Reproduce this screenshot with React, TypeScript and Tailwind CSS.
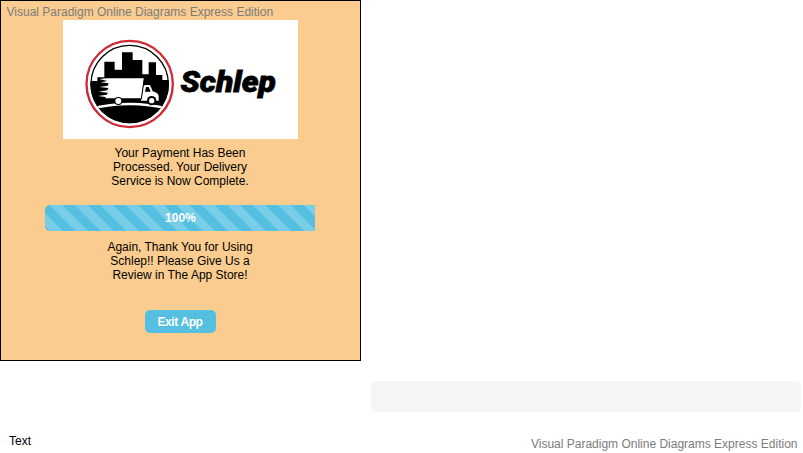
function Logo() {
  return (
    <svg viewBox="0 0 235 119" className="block h-[119px] w-[235px] bg-white">
      <defs>
        <clipPath id="disc">
          <circle cx="149" cy="147" r="118" />
        </clipPath>
      </defs>
      <g transform="translate(17 15) scale(0.33333)">
        <circle cx="149" cy="147" r="129.500" fill="none" stroke="#cf2a34" strokeWidth="7" />
        <circle cx="149" cy="147" r="116" fill="none" stroke="#000" strokeWidth="4" />
        <g clipPath="url(#disc)">
          <path d="M20 138H52V127H73V80H104V104H126V52H158V75H187V118H206V82H228V120H247V135H280V290H20Z" fill="#000" />
          <path d="M20 221Q149 185 278 221V228Q149 194 20 228Z" fill="#fff" />
        </g>
        <path d="M80 130H192L184 190H76L77 186L54 183L80 179L84 173L56 170L82 166L85 159L58 156L83 152L86 145L62 142L82 138L58 132Z" fill="#fff" />
        <path d="M196 150H210L218 169Q236 174 236 184V197H183L190 152Z" fill="#fff" />
        <path d="M198 156H206L212 170H195Z" fill="#000" />
        <path d="M193 130L184 192" stroke="#000" strokeWidth="3" />
        <circle cx="115" cy="198" r="12" fill="#000" />
        <circle cx="115" cy="198" r="9" fill="#fff" />
        <circle cx="215" cy="197" r="14" fill="#000" />
        <circle cx="215" cy="197" r="8" fill="#fff" />
      </g>
      <text
        x="117.5"
        y="72"
        textLength="95.5"
        lengthAdjust="spacingAndGlyphs"
        stroke="#000"
        strokeWidth="0.8"
        className="fill-black font-['Roboto',sans-serif] text-[30px] font-black italic"
      >
        Schlep
      </text>
    </svg>
  );
}

export default function App() {
  return (
    <div className="flex h-[453px] w-[803px] overflow-hidden bg-white font-['Liberation_Sans',Arial,sans-serif] text-[12px] leading-[14px] text-black">
      <div className="flex w-[361px] flex-col">
        <section className="flex h-[361px] flex-col items-center border border-black bg-[#facc8f] pr-[1px]">
          <p className="h-[19px] self-start pt-[4px] pl-[5.5px] text-[#7c7c7c]">
            Visual Paradigm Online Diagrams Express Edition
          </p>
          <Logo />
          <p className="mt-[7px] text-center">
            Your Payment Has Been
            <br />
            Processed. Your Delivery
            <br />
            Service is Now Complete.
          </p>
          <div className="mt-[17px] ml-[0.8px] flex h-[26px] w-[270px] items-center justify-center rounded-l-[5px] bg-[#54bfe0] bg-[linear-gradient(45deg,#78cde7_25%,transparent_25%,transparent_50%,#78cde7_50%,#78cde7_75%,transparent_75%)] bg-[size:25.4px_25.4px] bg-[position:5px_0px] font-bold text-white">
            100%
          </div>
          <p className="mt-[9px] text-center">
            Again, Thank You for Using
            <br />
            Schlep!! Please Give Us a
            <br />
            Review in The App Store!
          </p>
          <button className="mt-[28px] h-[23px] w-[71px] rounded-[5px] bg-[#54bfe0] font-bold tracking-[-0.4px] text-white">
            Exit App
          </button>
        </section>
        <p className="mt-[73px] pl-[9px]">Text</p>
      </div>
      <div className="flex flex-1 flex-col items-end pr-[2.5px]">
        <div className="mt-[380.5px] h-[31.5px] w-[429.5px] rounded-[5px] bg-[#f5f5f5]" />
        <p className="mt-[25px] pr-[3px] text-[#7c7c7c]">Visual Paradigm Online Diagrams Express Edition</p>
      </div>
    </div>
  );
}
